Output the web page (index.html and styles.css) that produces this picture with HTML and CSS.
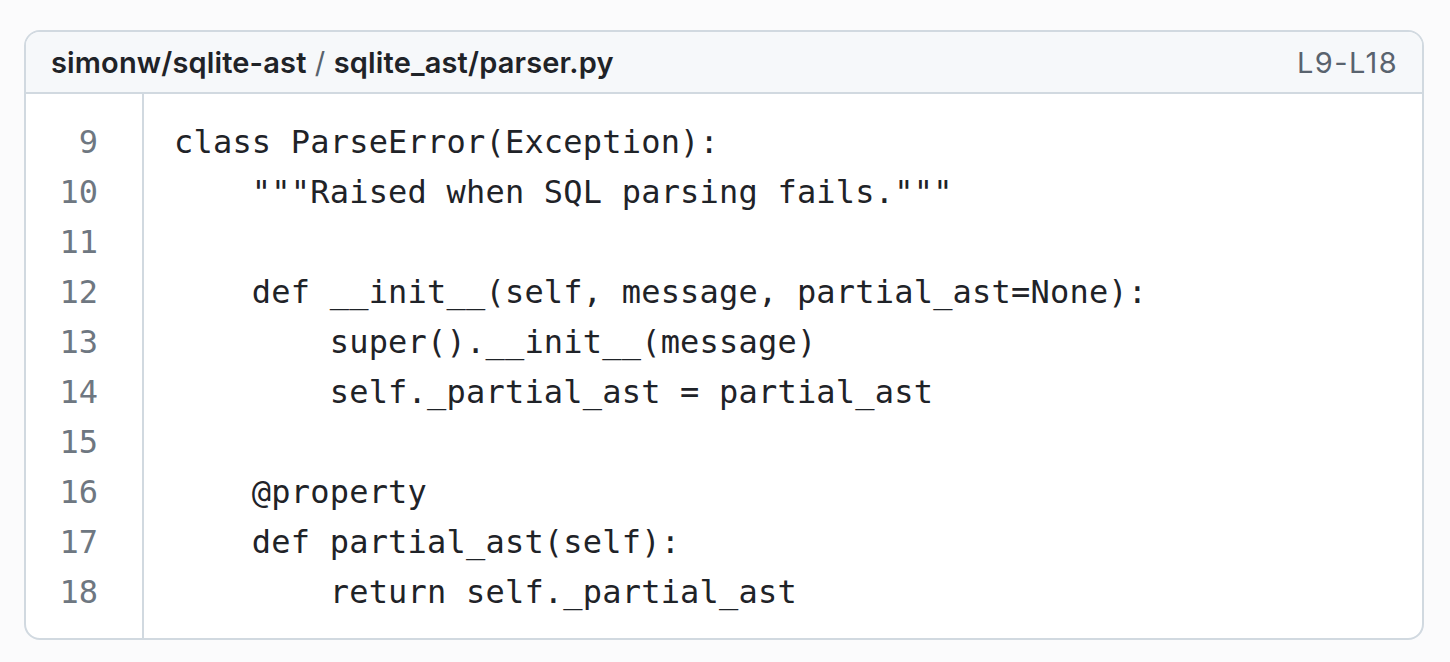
FILE: index.html
```html
<!DOCTYPE html>
<html lang="en">
<head>
<meta charset="utf-8">
<title>simonw/sqlite-ast / sqlite_ast/parser.py</title>
<link rel="stylesheet" href="styles.css">
</head>
<body>
<div class="embed">
  <div class="embed-header">
    <div class="path"><span class="repo">simonw/sqlite-ast</span><span class="sep"> / </span><span class="file">sqlite_ast/parser.py</span></div>
    <div class="range">L9-L18</div>
  </div>
  <div class="embed-body">
    <div class="gutter">
      <div class="ln">9</div>
      <div class="ln">10</div>
      <div class="ln">11</div>
      <div class="ln">12</div>
      <div class="ln">13</div>
      <div class="ln">14</div>
      <div class="ln">15</div>
      <div class="ln">16</div>
      <div class="ln">17</div>
      <div class="ln">18</div>
    </div>
    <div class="code">
      <div class="line">class ParseError(Exception):</div>
      <div class="line">    """Raised when SQL parsing fails."""</div>
      <div class="line"> </div>
      <div class="line">    def __init__(self, message, partial_ast=None):</div>
      <div class="line">        super().__init__(message)</div>
      <div class="line">        self._partial_ast = partial_ast</div>
      <div class="line"> </div>
      <div class="line">    @property</div>
      <div class="line">    def partial_ast(self):</div>
      <div class="line">        return self._partial_ast</div>
    </div>
  </div>
</div>
</body>
</html>
```

FILE: styles.css
```css
html, body {
  margin: 0;
  padding: 0;
  background: #fbfbfc;
}
body {
  padding: 30px 26px 0 24px;
  font-family: Inter, "Liberation Sans", Arial, sans-serif;
  color: #1f2328;
}
.embed {
  border: 2px solid #d1d9e0;
  border-radius: 16px;
  background: #ffffff;
  overflow: hidden;
}
.embed-header {
  display: flex;
  justify-content: space-between;
  align-items: center;
  height: 60px;
  padding: 0 24px 0 25px;
  background: #f6f8fa;
  border-bottom: 2px solid #d1d9e0;
  font-size: 29px;
}
.path {
  font-weight: 600;
  color: #1f2328;
  letter-spacing: 0.15px;
}
.sep {
  color: #59636e;
  font-weight: 400;
}
.range {
  color: #59636e;
  letter-spacing: 1.4px;
}
.embed-body {
  display: flex;
  font-family: "DejaVu Sans Mono", Menlo, monospace;
  font-size: 32px;
  line-height: 50px;
}
.gutter {
  box-sizing: border-box;
  width: 118px;
  padding: 23px 44px 21px 0;
  border-right: 2px solid #d1d9e0;
  text-align: right;
  color: #6e7781;
}
.code {
  padding: 23px 0 21px 30px;
  color: #1f2328;
  letter-spacing: 0.2px;
}
.line, .ln {
  height: 50px;
}
.line {
  white-space: pre;
}
```
